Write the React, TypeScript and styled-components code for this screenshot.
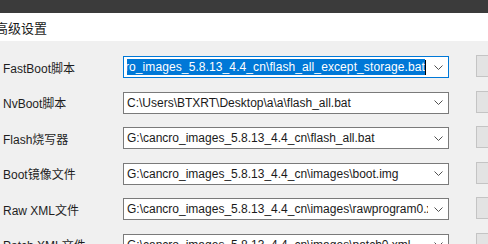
import React from "react";
import styled, { createGlobalStyle } from "styled-components";

const Global = createGlobalStyle`
  html, body { margin: 0; padding: 0; background: #f0f0f0; }
  body { width: 488px; height: 244px; overflow: hidden; font-family: "Liberation Sans", "Noto Sans CJK SC", sans-serif; }
`;

const Window = styled.div`
  width: 488px;
  height: 244px;
  overflow: hidden;
  display: flex;
  flex-direction: column;
  background: #f0f0f0;
`;

const TopBar = styled.div`
  height: 13px;
  background: #3b3b3b;
  flex-shrink: 0;
`;

const Header = styled.div`
  height: 28px;
  background: #ffffff;
  display: flex;
  align-items: center;
  flex-shrink: 0;
`;

const Title = styled.span`
  margin-left: -5px;
  margin-top: 1px;
  font-family: "Noto Sans CJK SC", sans-serif;
  font-size: 13px;
  color: #1a1a1a;
`;

const Form = styled.div`
  display: grid;
  grid-template-columns: 120px 326px 27px 30px;
  grid-auto-rows: 22px;
  row-gap: 13.6px;
  padding: 15px 0 0 3px;
  align-items: center;
`;

const Label = styled.span`
  font-size: 12px;
  color: #1e1e1e;
  white-space: nowrap;
  font-family: "Liberation Sans", "Noto Sans CJK SC", sans-serif;
`;

const Combo = styled.div<{ $focused?: boolean }>`
  height: 22px;
  box-sizing: border-box;
  border: 1px solid ${(p) => (p.$focused ? "#0078d7" : "#7a7a7a")};
  background: #ffffff;
  display: flex;
  align-items: center;
  padding-left: 3px;
  overflow: hidden;
`;

const ComboText = styled.div<{ $alignEnd?: boolean }>`
  flex: 1;
  min-width: 0;
  display: flex;
  align-items: center;
  justify-content: ${(p) => (p.$alignEnd ? "flex-end" : "flex-start")};
  overflow: hidden;
  white-space: nowrap;
  font-size: 12px;
  color: #1a1a1a;
  height: 16px;
  line-height: 16px;
  padding-right: 2px;
`;

const Selected = styled.span`
  background: #0078d7;
  color: #ffffff;
  flex-shrink: 0;
  letter-spacing: 0.1px;
`;

const Caret = styled.span`
  width: 1px;
  height: 15px;
  background: #000;
  flex-shrink: 0;
`;

const Arrow = styled.div`
  width: 20px;
  height: 100%;
  display: flex;
  align-items: center;
  justify-content: center;
  flex-shrink: 0;
`;

const BrowseButton = styled.div`
  grid-column: 4;
  height: 22px;
  margin-top: -2px;
  box-sizing: border-box;
  border: 1px solid #c4c4c4;
  background: #e3e3e3;
`;

const Chevron = () => (
  <svg width="9" height="5" viewBox="0 0 9 5">
    <path d="M0.5 0.5 L4.5 4.5 L8.5 0.5" fill="none" stroke="#505050" strokeWidth="1" />
  </svg>
);

const rows = [
  { label: "FastBoot脚本", value: "G:\\cancro_images_5.8.13_4.4_cn\\flash_all_except_storage.bat", focused: true },
  { label: "NvBoot脚本", value: "C:\\Users\\BTXRT\\Desktop\\a\\a\\flash_all.bat" },
  { label: "Flash烧写器", value: "G:\\cancro_images_5.8.13_4.4_cn\\flash_all.bat" },
  { label: "Boot镜像文件", value: "G:\\cancro_images_5.8.13_4.4_cn\\images\\boot.img" },
  { label: "Raw XML文件", value: "G:\\cancro_images_5.8.13_4.4_cn\\images\\rawprogram0.xml" },
  { label: "Patch XML文件", value: "G:\\cancro_images_5.8.13_4.4_cn\\images\\patch0.xml" },
];

export default function App() {
  return (
    <>
      <Global />
      <Window>
        <TopBar />
        <Header>
          <Title>高级设置</Title>
        </Header>
        <Form>
          {rows.map((r) => (
            <React.Fragment key={r.label}>
              <Label>{r.label}</Label>
              <Combo $focused={r.focused}>
                <ComboText $alignEnd={r.focused}>
                  {r.focused ? (
                    <>
                      <Selected>{r.value}</Selected>
                      <Caret />
                    </>
                  ) : (
                    r.value
                  )}
                </ComboText>
                <Arrow>
                  <Chevron />
                </Arrow>
              </Combo>
              <BrowseButton />
            </React.Fragment>
          ))}
        </Form>
      </Window>
    </>
  );
}
